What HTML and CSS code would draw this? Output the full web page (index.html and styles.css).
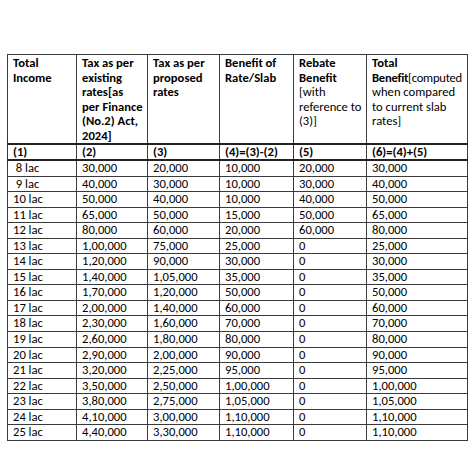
FILE: index.html
```html
<!DOCTYPE html>
<html>
<head>
<meta charset="utf-8">
<link rel="stylesheet" href="styles.css">
</head>
<body>
<table class="tax">
<colgroup>
<col class="c1"><col class="c2"><col class="c3"><col class="c4"><col class="c5"><col class="c6">
</colgroup>
<thead>
<tr class="head">
<th>Total<br>Income</th>
<th>Tax as per<br>existing<br>rates[as<br>per Finance<br>(No.2) Act,<br>2024]</th>
<th>Tax as per<br>proposed<br>rates</th>
<th>Benefit of<br>Rate/Slab</th>
<th>Rebate<br>Benefit<br><span class="reg">[with<br>reference to<br>(3)]</span></th>
<th>Total<br><span class="tight">Benefit<span class="reg">[computed</span></span><span class="reg"><br>when compared<br>to current slab<br>rates]</span></th>
</tr>
<tr class="nums">
<th>(1)</th><th>(2)</th><th>(3)</th><th>(4)=(3)-(2)</th><th>(5)</th><th>(6)=(4)+(5)</th>
</tr>
</thead>
<tbody>
<tr><td>&nbsp;8 lac</td><td>30,000</td><td>20,000</td><td>10,000</td><td>20,000</td><td>30,000</td></tr>
<tr><td>&nbsp;9 lac</td><td>40,000</td><td>30,000</td><td>10,000</td><td>30,000</td><td>40,000</td></tr>
<tr><td>10 lac</td><td>50,000</td><td>40,000</td><td>10,000</td><td>40,000</td><td>50,000</td></tr>
<tr><td>11 lac</td><td>65,000</td><td>50,000</td><td>15,000</td><td>50,000</td><td>65,000</td></tr>
<tr><td>12 lac</td><td>80,000</td><td>60,000</td><td>20,000</td><td>60,000</td><td>80,000</td></tr>
<tr><td>13 lac</td><td>1,00,000</td><td>75,000</td><td>25,000</td><td>0</td><td>25,000</td></tr>
<tr><td>14 lac</td><td>1,20,000</td><td>90,000</td><td>30,000</td><td>0</td><td>30,000</td></tr>
<tr><td>15 lac</td><td>1,40,000</td><td>1,05,000</td><td>35,000</td><td>0</td><td>35,000</td></tr>
<tr><td>16 lac</td><td>1,70,000</td><td>1,20,000</td><td>50,000</td><td>0</td><td>50,000</td></tr>
<tr><td>17 lac</td><td>2,00,000</td><td>1,40,000</td><td>60,000</td><td>0</td><td>60,000</td></tr>
<tr><td>18 lac</td><td>2,30,000</td><td>1,60,000</td><td>70,000</td><td>0</td><td>70,000</td></tr>
<tr><td>19 lac</td><td>2,60,000</td><td>1,80,000</td><td>80,000</td><td>0</td><td>80,000</td></tr>
<tr><td>20 lac</td><td>2,90,000</td><td>2,00,000</td><td>90,000</td><td>0</td><td>90,000</td></tr>
<tr><td>21 lac</td><td>3,20,000</td><td>2,25,000</td><td>95,000</td><td>0</td><td>95,000</td></tr>
<tr><td>22 lac</td><td>3,50,000</td><td>2,50,000</td><td>1,00,000</td><td>0</td><td>1,00,000</td></tr>
<tr><td>23 lac</td><td>3,80,000</td><td>2,75,000</td><td>1,05,000</td><td>0</td><td>1,05,000</td></tr>
<tr><td>24 lac</td><td>4,10,000</td><td>3,00,000</td><td>1,10,000</td><td>0</td><td>1,10,000</td></tr>
<tr><td>25 lac</td><td>4,40,000</td><td>3,30,000</td><td>1,10,000</td><td>0</td><td>1,10,000</td></tr>
</tbody>
</table>
</body>
</html>
```
FILE: styles.css
```css
html, body {
  margin: 0;
  background: #ffffff;
}
body {
  padding: 54px 7px 0 7px;
  font-family: Carlito, Calibri, "Liberation Sans", sans-serif;
  font-size: 12.6px;
  color: #000;
}
.tax {
  border-collapse: collapse;
  table-layout: fixed;
  width: 460px;
}
.c1 { width: 69px; }
.c2 { width: 71px; }
.c3 { width: 72px; }
.c4 { width: 74px; }
.c5 { width: 73px; }
.c6 { width: 101px; }
.tax th, .tax td {
  border: 1px solid #3a3a3a;
  text-align: left;
  vertical-align: top;
  padding: 0 0 0 5px;
  line-height: 14px;
  overflow: hidden;
  white-space: nowrap;
}
.tax th {
  font-weight: bold;
}
.head th {
  height: 86px;
  padding-top: 1px;
  line-height: 14.5px;
  border-bottom: 2px solid #222;
}
.nums th {
  height: 13px;
  border-bottom: 2px solid #222;
}
.reg {
  font-weight: normal;
}
.tight {
  letter-spacing: -0.25px;
}
.tax td {
  height: 14.56px;
  padding-top: 0;
}
```
